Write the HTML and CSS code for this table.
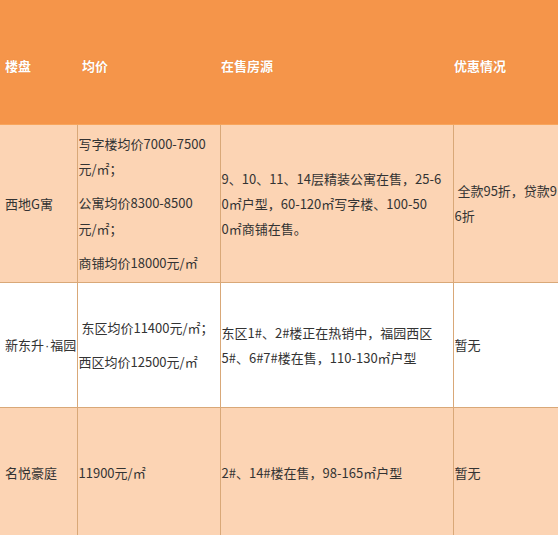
FILE: index.html
```html
<!DOCTYPE html>
<html lang="zh">
<head>
<meta charset="utf-8">
<link rel="stylesheet" href="styles.css">
</head>
<body>
<table class="tbl">
  <colgroup>
    <col class="c1"><col class="c2"><col class="c3"><col class="c4">
  </colgroup>
  <thead>
    <tr class="head">
      <th class="pad5">楼盘</th>
      <th class="pad5">均价</th>
      <th>在售房源</th>
      <th>优惠情况</th>
    </tr>
  </thead>
  <tbody>
    <tr class="row peach r1">
      <td class="pad5">西地G寓</td>
      <td>
        <p class="para">写字楼均价7000-7500<br>元/㎡；</p>
        <p class="para">公寓均价8300-8500<br>元/㎡；</p>
        <p class="para">商铺均价18000元/㎡</p>
      </td>
      <td class="lines">9、10、11、14层精装公寓在售，25-6<br>0㎡户型，60-120㎡写字楼、100-50<br>0㎡商铺在售。</td>
      <td class="lines">&nbsp;全款95折，贷款9<br>6折</td>
    </tr>
    <tr class="row white r2">
      <td class="pad5">新东升<span class="dot">·</span>福园</td>
      <td>
        <p class="para">&nbsp;东区均价11400元/㎡；</p>
        <p class="para">西区均价12500元/㎡</p>
      </td>
      <td class="lines">东区1#、2#楼正在热销中，福园西区<br>5#、6#7#楼在售，110-130㎡户型</td>
      <td>暂无</td>
    </tr>
    <tr class="row peach r3">
      <td class="pad5">名悦豪庭</td>
      <td>11900元/㎡</td>
      <td>2#、14#楼在售，98-165㎡户型</td>
      <td>暂无</td>
    </tr>
  </tbody>
</table>
</body>
</html>
```
FILE: styles.css
```css
html, body {
  margin: 0;
  padding: 0;
  background: #ffffff;
}
body {
  font-family: "Noto Sans CJK SC", "Noto Sans", sans-serif;
  font-size: 13px;
  color: #333333;
}
.tbl {
  border-collapse: collapse;
  table-layout: fixed;
  width: 559px;
}
.c1 { width: 77px; }
.c2 { width: 143px; }
.c3 { width: 233px; }
.c4 { width: 106px; }

.tbl th, .tbl td {
  padding: 0 0 0 1px;
  text-align: left;
  vertical-align: middle;
  white-space: nowrap;
  overflow: hidden;
}
.tbl .pad5 { padding-left: 5px; }

.dot {
  font-family: "Liberation Sans", sans-serif;
  padding: 0 1px;
}

.head th {
  background: #f5954a;
  color: #ffffff;
  font-weight: 700;
  height: 124px;
  padding-top: 8px;
  box-sizing: border-box;
  border-bottom: 1px solid #f8a55c;
  text-shadow: 0 0 1px rgba(180, 90, 20, 0.4);
}
.row td {
  border: 1px solid #d9a878;
  border-top: none;
  line-height: 25px;
}
.row td:first-child { border-left: none; }
.row td:last-child { border-right: none; }
.row td + td { border-left-color: #cfa07a; }

.peach td { background: #fcd4b4; }
.white td { background: #ffffff; }

.r1 td { height: 157px; }
.r2 td { height: 124px; }
.r3 td { height: 130px; }

.para {
  margin: 0;
  line-height: 25.5px;
}
.para + .para { margin-top: 8.5px; }
.lines { line-height: 25px; }
```
